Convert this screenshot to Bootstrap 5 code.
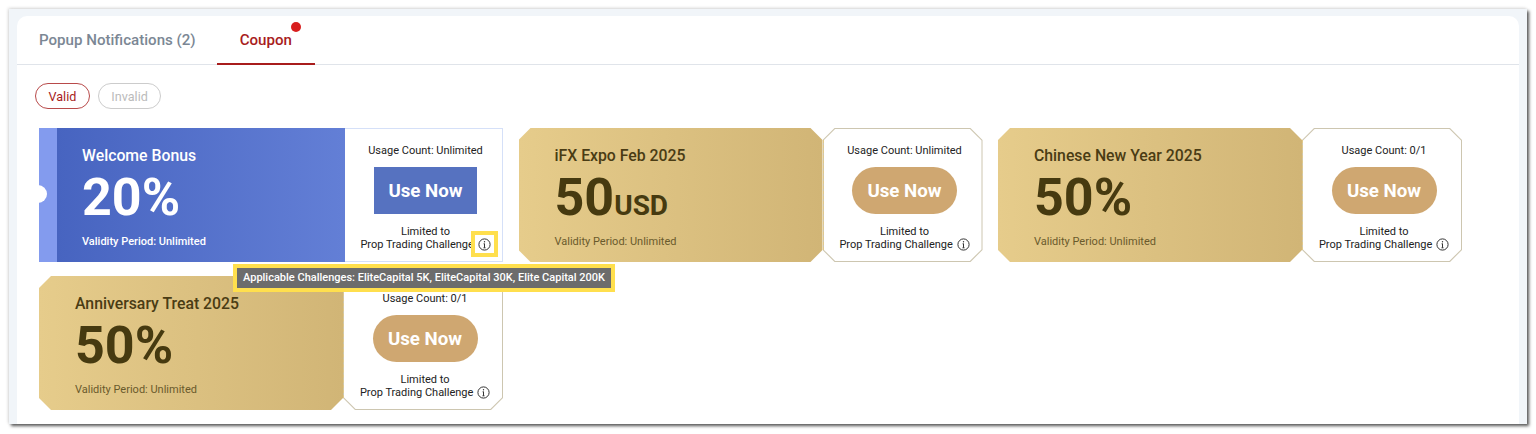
<!DOCTYPE html>
<html lang="en">
<head>
  <meta charset="UTF-8">
  <title>Coupon</title>
  <link href="https://cdn.jsdelivr.net/npm/bootstrap@5.3.2/dist/css/bootstrap.min.css" rel="stylesheet">
  <style>
    html, body { height: 100%; }
    body {
      background: #fff;
      font-family: Roboto, "Liberation Sans", sans-serif;
      overflow: hidden;
      padding: 9px 9px 10px 9px;
    }
    .frame {
      height: 100%;
      background: #f1f5f9;
      padding: 7px 8px 0 8px;
      box-shadow: 2px 2px 3px #555, -1px -1px 3px #ddd;
    }
    .sheet {
      height: 100%;
      background: #fff;
      border-radius: 10px 10px 0 0;
    }
    .tab-bar { border-bottom: 1px solid #e0e4ea; height: 49px; padding-left: 22px; }
    .tab-item {
      font-size: 15.1px;
      font-weight: 500;
      color: #7b8794;
      line-height: 49px;
      height: 49px;
    }
    .tab-item.active-tab {
      position: relative;
      color: #a81c1c;
      margin-left: 21px;
      padding: 0 23px;
      border-bottom: 2px solid #a81c1c;
    }
    .tab-dot {
      position: absolute;
      top: 6px;
      right: 14px;
      width: 10px;
      height: 10px;
      border-radius: 50%;
      background: #d81e1e;
    }
    .pill-row { padding: 18px 0 0 18px; gap: 8px; }
    .pill-btn {
      font-size: 12.6px;
      line-height: 25px;
      padding: 0 12.5px;
      height: 26px;
      background: #fff;
    }
    .pill-on { color: #a81c1c; border: 1px solid #b84a4a; }
    .pill-off { color: #bbb; border: 1px solid #ccc; }
    .coupon-wrap { padding: 19px 0 0 22px; gap: 14px 15.5px; width: 1460px; }
    .coupon-item { position: relative; width: 464px; height: 134px; }
    .coupon-main { width: 304px; flex: none; }
    .main-gold {
      padding-left: 36px;
      background: linear-gradient(90deg, #e6cc8b, #d1b576);
      clip-path: polygon(12px 0, calc(100% - 12px) 0, 100% 12px, 100% calc(100% - 12px), calc(100% - 12px) 100%, 12px 100%, 0 calc(100% - 12px), 0 12px);
      color: #4a3c14;
    }
    .main-blue {
      position: relative;
      width: 306px;
      padding-left: 43px;
      background: linear-gradient(90deg, #839bee 18px, #4764c0 18px, #637fd6 100%);
      color: #fff;
    }
    .main-blue::before {
      content: "";
      position: absolute;
      left: -10px;
      top: 57px;
      width: 18px;
      height: 18px;
      border-radius: 50%;
      background: #fff;
    }
    .coupon-title { font-size: 15.8px; font-weight: 500; line-height: 20px; margin-top: 18px; }
    .coupon-num { font-size: 52px; font-weight: 700; line-height: 60px; margin-top: 2px; color: #463a10; }
    .main-blue .coupon-num { color: #fff; }
    .coupon-unit { font-size: 28px; line-height: 1; }
    .coupon-valid { font-size: 11px; line-height: 16px; margin-top: 6px; color: #6a5a2c; }
    .main-blue .coupon-valid { color: #fff; font-weight: 500; }
    .coupon-side {
      position: relative;
      flex: 1;
      padding: 15px 0 0 4px;
      font-size: 11px;
      color: #222;
      --cut: 12px;
      background: #cdc6b0;
      clip-path: polygon(var(--cut) 0, calc(100% - var(--cut)) 0, 100% var(--cut), 100% calc(100% - var(--cut)), calc(100% - var(--cut)) 100%, var(--cut) 100%, 0 calc(100% - var(--cut)), 0 var(--cut));
    }
    .coupon-side::before {
      content: "";
      position: absolute;
      inset: 1px;
      background: #fff;
      clip-path: polygon(11.6px 0, calc(100% - 11.6px) 0, 100% 11.6px, 100% calc(100% - 11.6px), calc(100% - 11.6px) 100%, 11.6px 100%, 0 calc(100% - 11.6px), 0 11.6px);
    }
    .coupon-side > * { position: relative; }
    .side-dash {
      position: absolute !important;
      left: 0;
      top: 12px;
      bottom: 12px;
      border-left: 1px dashed #e0c88c;
    }
    .side-blue {
      clip-path: none;
      background: #fff;
      border: 1px solid #d5e0f8;
      border-left: 0;
      padding: 14px 0 0 4px;
    }
    .side-blue::before { display: none; }
    .usage-line { line-height: 16px; }
    .use-btn {
      width: 105px;
      height: 47px;
      margin-top: 8px;
      padding: 2px 0 0;
      border: 0;
      border-radius: 24px;
      background: #cfa771;
      color: #fff;
      font-size: 18.7px;
      font-weight: 700;
    }
    .use-btn:hover, .use-btn:active { background: #cfa771; color: #fff; }
    .use-square, .use-square:hover { width: 103px; border-radius: 0; background: #5672c0; }
    .limit-text { line-height: 13px; margin-top: 11px; }
    .info-ico { width: 13px; height: 13px; vertical-align: -3px; margin-left: 1px; }
    .ico-hi { position: relative; display: inline-block; line-height: 0; }
    .ico-hi::before {
      content: "";
      position: absolute;
      left: -6px;
      right: -7px;
      top: -7px;
      bottom: -6px;
      background: #fff;
      border: 4px solid #ffdf4d;
    }
    .ico-hi svg { position: relative; }
    .tip-box {
      position: absolute;
      left: 194px;
      top: 136px;
      z-index: 5;
      background: #6c6c6c;
      color: #fff;
      border: 4px solid #ffdf4d;
      padding: 0 6px;
      font-size: 11px;
      font-weight: 500;
      line-height: 20px;
      white-space: nowrap;
    }
  </style>
</head>
<body>
  <div class="frame">
    <div class="sheet">
      <div class="tab-bar d-flex">
        <div class="tab-item">Popup Notifications (2)</div>
        <div class="tab-item active-tab">Coupon<span class="tab-dot"></span></div>
      </div>

      <div class="pill-row d-flex">
        <button type="button" class="btn rounded-pill pill-btn pill-on">Valid</button>
        <button type="button" class="btn rounded-pill pill-btn pill-off">Invalid</button>
      </div>

      <div class="coupon-wrap d-flex flex-wrap">
        <!-- carte bleue -->
        <div class="coupon-item d-flex">
          <div class="coupon-main main-blue">
            <div class="coupon-title">Welcome Bonus</div>
            <div class="coupon-num">20%</div>
            <div class="coupon-valid">Validity Period: Unlimited</div>
          </div>
          <div class="coupon-side side-blue d-flex flex-column align-items-center text-center">
            <div class="usage-line">Usage Count: Unlimited</div>
            <button type="button" class="btn use-btn use-square">Use Now</button>
            <div class="limit-text">Limited to<br>Prop Trading Challenge <span class="ico-hi"><svg class="info-ico" viewBox="0 0 13 13" fill="none" stroke="#333"><circle cx="6.5" cy="6.5" r="5.6"/><path d="M6.5 5.6V9.8M5.6 5.8H6.5M5.5 9.8H7.5"/><circle cx="6.5" cy="3.7" r=".7" fill="#333" stroke="none"/></svg></span></div>
          </div>
          <div class="tip-box">Applicable Challenges: EliteCapital 5K, EliteCapital 30K, Elite Capital 200K</div>
        </div>

        <div class="coupon-item d-flex">
          <div class="coupon-main main-gold">
            <div class="coupon-title">iFX Expo Feb 2025</div>
            <div class="coupon-num">50<span class="coupon-unit">USD</span></div>
            <div class="coupon-valid">Validity Period: Unlimited</div>
          </div>
          <div class="coupon-side d-flex flex-column align-items-center text-center">
            <span class="side-dash"></span>
            <div class="usage-line">Usage Count: Unlimited</div>
            <button type="button" class="btn use-btn">Use Now</button>
            <div class="limit-text">Limited to<br>Prop Trading Challenge <svg class="info-ico" viewBox="0 0 13 13" fill="none" stroke="#333"><circle cx="6.5" cy="6.5" r="5.6"/><path d="M6.5 5.6V9.8M5.6 5.8H6.5M5.5 9.8H7.5"/><circle cx="6.5" cy="3.7" r=".7" fill="#333" stroke="none"/></svg></div>
          </div>
        </div>

        <div class="coupon-item d-flex">
          <div class="coupon-main main-gold">
            <div class="coupon-title">Chinese New Year 2025</div>
            <div class="coupon-num">50%</div>
            <div class="coupon-valid">Validity Period: Unlimited</div>
          </div>
          <div class="coupon-side d-flex flex-column align-items-center text-center">
            <span class="side-dash"></span>
            <div class="usage-line">Usage Count: 0/1</div>
            <button type="button" class="btn use-btn">Use Now</button>
            <div class="limit-text">Limited to<br>Prop Trading Challenge <svg class="info-ico" viewBox="0 0 13 13" fill="none" stroke="#333"><circle cx="6.5" cy="6.5" r="5.6"/><path d="M6.5 5.6V9.8M5.6 5.8H6.5M5.5 9.8H7.5"/><circle cx="6.5" cy="3.7" r=".7" fill="#333" stroke="none"/></svg></div>
          </div>
        </div>

        <div class="coupon-item d-flex">
          <div class="coupon-main main-gold">
            <div class="coupon-title">Anniversary Treat 2025</div>
            <div class="coupon-num">50%</div>
            <div class="coupon-valid">Validity Period: Unlimited</div>
          </div>
          <div class="coupon-side d-flex flex-column align-items-center text-center">
            <span class="side-dash"></span>
            <div class="usage-line">Usage Count: 0/1</div>
            <button type="button" class="btn use-btn">Use Now</button>
            <div class="limit-text">Limited to<br>Prop Trading Challenge <svg class="info-ico" viewBox="0 0 13 13" fill="none" stroke="#333"><circle cx="6.5" cy="6.5" r="5.6"/><path d="M6.5 5.6V9.8M5.6 5.8H6.5M5.5 9.8H7.5"/><circle cx="6.5" cy="3.7" r=".7" fill="#333" stroke="none"/></svg></div>
          </div>
        </div>
      </div>
    </div>
  </div>

  <script src="https://cdn.jsdelivr.net/npm/bootstrap@5.3.2/dist/js/bootstrap.bundle.min.js"></script>
</body>
</html>
